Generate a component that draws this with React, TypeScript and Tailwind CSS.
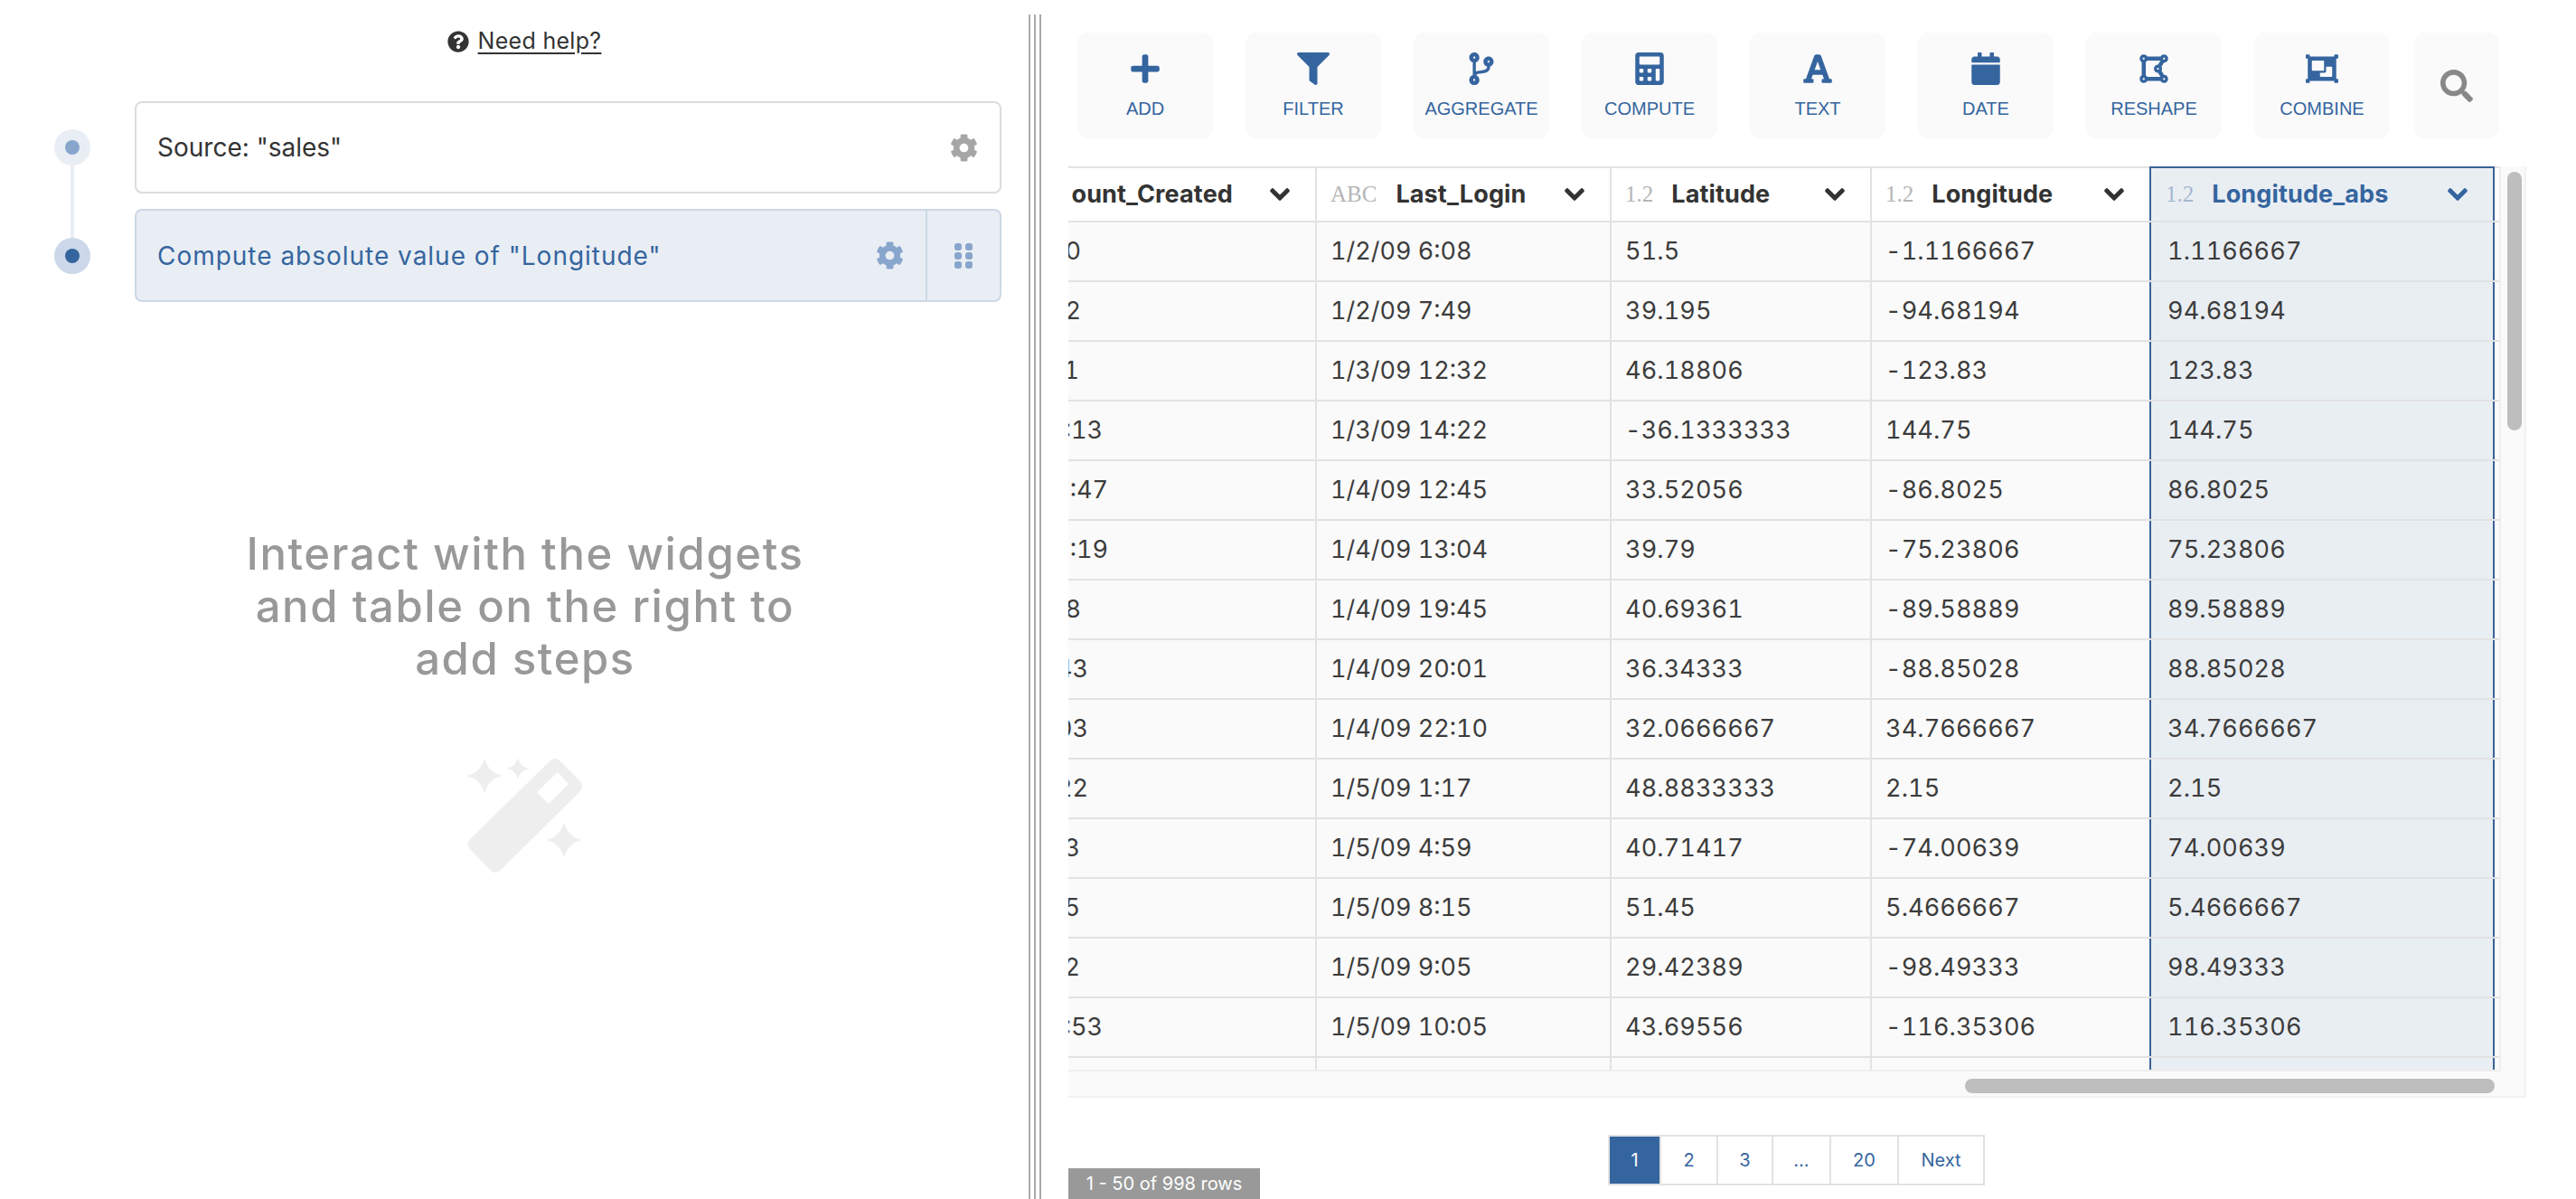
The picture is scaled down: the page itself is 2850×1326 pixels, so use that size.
import React from "react";
import { FaPlus, FaFilter, FaCodeBranch, FaCalculator, FaFont, FaCalendar, FaDrawPolygon, FaObjectGroup, FaSearch, FaCog, FaQuestionCircle, FaChevronDown } from "react-icons/fa";

const tools = [
  { label: "ADD", Icon: FaPlus },
  { label: "FILTER", Icon: FaFilter },
  { label: "AGGREGATE", Icon: FaCodeBranch },
  { label: "COMPUTE", Icon: FaCalculator },
  { label: "TEXT", Icon: FaFont },
  { label: "DATE", Icon: FaCalendar },
  { label: "RESHAPE", Icon: FaDrawPolygon },
  { label: "COMBINE", Icon: FaObjectGroup },
];

const rows: [string, number, string, string, string, string][] = [
  ["1/2/09 6:00", 14, "1/2/09 6:08", "51.5", "-1.1166667", "1.1166667"],
  ["1/2/09 4:42", 14, "1/2/09 7:49", "39.195", "-94.68194", "94.68194"],
  ["1/1/09 16:21", 12, "1/3/09 12:32", "46.18806", "-123.83", "123.83"],
  ["9/25/05 21:13", 38, "1/3/09 14:22", "-36.1333333", "144.75", "144.75"],
  ["11/15/08 15:47", 44, "1/4/09 12:45", "33.52056", "-86.8025", "86.8025"],
  ["9/24/08 15:19", 44, "1/4/09 13:04", "39.79", "-75.23806", "75.23806"],
  ["1/3/09 14:38", 14, "1/4/09 19:45", "40.69361", "-89.58889", "89.58889"],
  ["1/2/09 22:43", 22, "1/4/09 20:01", "36.34333", "-88.85028", "88.85028"],
  ["1/4/09 13:03", 22, "1/4/09 22:10", "32.0666667", "34.7666667", "34.7666667"],
  ["1/4/09 14:22", 22, "1/5/09 1:17", "48.8833333", "2.15", "2.15"],
  ["1/4/09 4:53", 13, "1/5/09 4:59", "40.71417", "-74.00639", "74.00639"],
  ["1/5/09 4:55", 13, "1/5/09 8:15", "51.45", "5.4666667", "5.4666667"],
  ["1/2/09 8:32", 13, "1/5/09 9:05", "29.42389", "-98.49333", "98.49333"],
  ["1/5/09 9:53", 38, "1/5/09 10:05", "43.69556", "-116.35306", "116.35306"],
  ["", 0, "", "", "", ""],
];

function Wand() {
  const star = (x: number, y: number, r: number) =>
    `M${x} ${y - r}Q${x + r * 0.18} ${y - r * 0.18} ${x + r} ${y}Q${x + r * 0.18} ${y + r * 0.18} ${x} ${y + r}Q${x - r * 0.18} ${y + r * 0.18} ${x - r} ${y}Q${x - r * 0.18} ${y - r * 0.18} ${x} ${y - r}Z`;
  return (
    <svg viewBox="0 0 128 128" className="w-[128px] h-[128px] mt-[80px]" fill="#eeeeee">
      <path fillRule="evenodd" d="M91 4Q97 -2 103 4L124 25Q130 31 125 37L37 124Q31 130 25 124L4 102Q-2 96 3 90ZM100 16L77 38L90 51L112 29Z" />
      <path d={star(19, 20, 20)} />
      <path d={star(56, 12, 12)} />
      <path d={star(107, 91, 20)} />
    </svg>
  );
}

function Drag() {
  const dots = [];
  for (const x of [0, 12]) for (const y of [0, 10, 20]) dots.push(<rect key={`${x}${y}`} x={x} y={y} width="8" height="8" rx="3" />);
  return (
    <svg viewBox="0 0 20 28" className="w-[20px] h-[28px]" fill="#88a5cc">
      {dots}
    </svg>
  );
}

const chev = "w-[24px] h-[24px] shrink-0 stroke-[24px]";

export default function App() {
  const cell = "h-full flex items-center shrink-0 whitespace-nowrap";
  const bar = "h-full w-[2px] bg-[#aaaaaa]";
  return (
    <div className="w-[2850px] h-[1326px] flex overflow-hidden bg-white font-[Inter,sans-serif] text-[#333333]">
      {/* Left panel */}
      <div className="w-[1138px] shrink-0 flex flex-col">
        <div className="h-[33px] mt-[29px] pl-[22px] flex items-center justify-center gap-[10px]">
          <FaQuestionCircle className="w-[24px] h-[24px] text-[#333333]" />
          <span className="text-[25px] underline underline-offset-[4px] tracking-[0.012em]">Need help?</span>
        </div>
        <div className="relative mt-[50px] ml-[60px] flex flex-col gap-[17px]">
          <div className="absolute left-[18px] top-[51px] w-[4px] h-[120px] bg-[#e9eef4]" />
          <div className="flex items-center gap-[49px] relative">
            <div className="w-[40px] h-[40px] rounded-full bg-[#e9eef4] flex items-center justify-center">
              <div className="w-[16px] h-[16px] rounded-full bg-[#88a5cc]" />
            </div>
            <div className="w-[959px] h-[102px] rounded-[8px] border-2 border-[#dcdcdc] bg-white flex items-center pl-[23px] pr-[24px] justify-between">
              <span className="text-[28px]">Source: "sales"</span>
              <FaCog className="w-[31px] h-[31px] text-[#a6a6a6]" />
            </div>
          </div>
          <div className="flex items-center gap-[49px] relative">
            <div className="w-[40px] h-[40px] rounded-full bg-[#ccd8e9] flex items-center justify-center">
              <div className="w-[16px] h-[16px] rounded-full bg-[#35659f]" />
            </div>
            <div className="w-[959px] h-[103px] rounded-[8px] border-2 border-[#ccd8e6] bg-[#e9eef4] flex items-center pl-[23px] text-[#35659f]">
              <span className="text-[28px] flex-1 tracking-[0.035em]">Compute absolute value of "Longitude"</span>
              <FaCog className="w-[31px] h-[31px] text-[#88a5cc] mr-[24px]" />
              <div className="w-[82px] h-full border-l-2 border-[#ccd8e6] flex items-center justify-center">
                <Drag />
              </div>
            </div>
          </div>
        </div>
        <div className="mt-[250px] pl-[24px] flex flex-col items-center">
          <div className="text-[49px] leading-[58px] font-medium text-[#999999] text-center tracking-[0.032em]">
            <div>Interact with the widgets</div>
            <div>and table on the right to</div>
            <div>add steps</div>
          </div>
          <Wand />
        </div>
      </div>

      {/* Divider */}
      <div className="w-[14px] shrink-0 pt-[16px] h-full flex gap-[4px]">
        <div className={bar} />
        <div className={bar} />
        <div className={bar} />
      </div>

      {/* Right panel */}
      <div className="flex-1 min-w-0 flex flex-col">
        <div className="pt-[36px] pl-[40px] flex">
          <div className="flex gap-[36px]">
            {tools.map(({ label, Icon }) => (
              <div key={label} className="w-[150px] h-[117px] rounded-[12px] bg-[#fafafa] flex flex-col items-center pt-[22px] text-[#35659f]">
                <Icon className="w-[36px] h-[36px]" />
                <span className="mt-[14px] text-[20px] leading-[24px] font-['Liberation_Sans',sans-serif]">{label}</span>
              </div>
            ))}
          </div>
          <div className="ml-[27px] w-[94px] h-[117px] rounded-[12px] bg-[#fafafa] flex items-center justify-center">
            <FaSearch className="w-[36px] h-[36px] text-[#888888]" />
          </div>
        </div>

        {/* Table */}
        <div className="relative mt-[31px] ml-[30px] w-[1613px] h-[1030px] bg-[#fafafa] border-r-2 border-b-2 border-[#f2f2f2]">
          <div className="w-[1585px] h-[1001px] overflow-hidden border-r-2 border-b-2 border-[#eeeeee]">
            <div className="flex h-[62px] text-[27px] font-bold bg-white border-t-2 border-b-2 border-[#e2e2e2]">
              <div className={`${cell} w-[275px] justify-end pr-[27px] border-r-2 border-[#e2e2e2] overflow-hidden`}>
                <span className="mr-[40px] tracking-[0.005em]">ount_Created</span>
                <FaChevronDown className={chev} />
              </div>
              {[
                { t: "ABC", n: "Last_Login", w: "w-[326px] border-r-2", g: "gap-[21px]" },
                { t: "1.2", n: "Latitude", w: "w-[288px] border-r-2", g: "gap-[20px]" },
                { t: "1.2", n: "Longitude", w: "w-[307px]", g: "gap-[20px]" },
              ].map((h) => (
                <div key={h.n} className={`${cell} ${h.w} justify-between pl-[15px] pr-[27px] border-[#e2e2e2]`}>
                  <span className={`flex items-center ${h.g}`}>
                    <span className="font-['Liberation_Serif',serif] font-normal text-[25px] text-[#b5b5b5]">{h.t}</span>
                    <span className="tracking-[0.005em]">{h.n}</span>
                  </span>
                  <FaChevronDown className={chev} />
                </div>
              ))}
              <div className="-mt-[2px] h-[60px] w-[382px] shrink-0 flex items-center justify-between pl-[16px] pr-[27px] border-x-2 border-t-2 border-[#3a6395] bg-[#e9eef3] text-[#35659f] whitespace-nowrap">
                <span className="flex items-center gap-[20px]">
                  <span className="font-['Liberation_Serif',serif] font-normal text-[25px] text-[#a4b7d0]">1.2</span>
                  <span className="tracking-[0.005em]">Longitude_abs</span>
                </span>
                <FaChevronDown className={chev} />
              </div>
            </div>
            {rows.map((r, i) => (
              <div key={i} className="flex h-[66px] text-[27px] text-[#3c3c3c] tabular-nums border-b-2 border-[#e2e2e2]">
                <div className={`${cell} w-[275px] border-r-2 border-[#e2e2e2] overflow-hidden`}>
                  <div className="overflow-hidden flex justify-end" style={{ width: r[1] }}>
                    <span className="shrink-0">{r[0]}</span>
                  </div>
                </div>
                <div className={`${cell} w-[326px] pl-[15px] border-r-2 border-[#e2e2e2]`}>{r[2]}</div>
                <div className={`${cell} w-[288px] pl-[15px] border-r-2 border-[#e2e2e2] tracking-[0.005em]`}>{r[3]}</div>
                <div className={`${cell} w-[307px] pl-[15px] tracking-[0.005em]`}>{r[4]}</div>
                <div className={`${cell} w-[382px] h-[66px] pl-[18px] border-x-2 border-[#3a6395] bg-[#e9eef3] tracking-[0.005em]`}>{r[5]}</div>
              </div>
            ))}
          </div>
          <div className="absolute left-[992px] top-[1009px] w-[586px] h-[16px] rounded-full bg-[#bebebe]" />
          <div className="absolute left-[1592px] top-[6px] w-[16px] h-[286px] rounded-full bg-[#bebebe]" />
        </div>

        {/* Footer */}
        <div className="ml-[30px] flex-1 flex items-start">
          <div className="self-end w-[212px] h-[34px] bg-[#999999] text-white text-[20px] flex items-center justify-center whitespace-nowrap">1 - 50 of 998 rows</div>
          <div className="ml-[385px] mt-[41px] flex h-[56px] border-2 border-[#e2e2e2] text-[20px] text-[#35659f]">
            <div className="w-[55px] bg-[#35659f] text-white flex items-center justify-center">1</div>
            {[
              ["2", "w-[63px]"],
              ["3", "w-[61px]"],
              ["...", "w-[64px]"],
              ["20", "w-[75px]"],
              ["Next", "w-[95px]"],
            ].map(([t, w]) => (
              <div key={t} className={`${w} border-l-2 border-[#e2e2e2] flex items-center justify-center`}>{t}</div>
            ))}
          </div>
        </div>
      </div>
    </div>
  );
}
